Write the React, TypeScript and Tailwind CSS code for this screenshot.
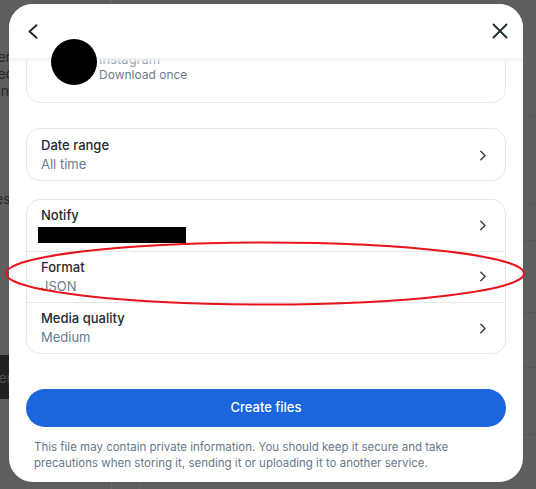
import { ReactNode } from 'react'

function ChevronRight() {
  return (
    <svg width="8" height="11" viewBox="0 0 8 11" fill="none" className="shrink-0">
      <path d="M1.8 1.3 L6 5.5 L1.8 9.7" stroke="#37444e" strokeWidth="1.5" strokeLinecap="round" strokeLinejoin="round" />
    </svg>
  )
}

function Row({ title, children, className = '' }: { title: string; children: ReactNode; className?: string }) {
  return (
    <div className={`flex items-center justify-between pl-[14px] pr-[18px] ${className}`}>
      <div className="flex flex-col">
        <span className="text-[13px] leading-[19px] font-medium text-[#1c2b33]">{title}</span>
        {children}
      </div>
      <ChevronRight />
    </div>
  )
}

function Value({ text }: { text: string }) {
  return <span className="text-[13px] leading-[19px] text-[#6a7b8c]">{text}</span>
}

export default function App() {
  return (
    <div
      className="relative h-[489px] w-[536px] overflow-hidden bg-[#5e5e5e] pl-[9px] pt-[4px]"
      style={{ fontFamily: 'Inter, "Noto Sans", sans-serif' }}
    >
      {/* page behind the overlay */}
      <div className="absolute left-0 top-[48px] flex flex-col text-[14px] leading-[17px] text-[#262626]">
        <span className="-ml-[7px]">ter</span>
        <span className="-ml-[7px]">ted</span>
        <span className="-ml-[7px]">and</span>
      </div>
      <span className="absolute -left-[5px] top-[188px] text-[14px] text-[#262626]">es</span>
      <div className="absolute left-0 top-[355px] flex h-[44px] w-[9px] items-center overflow-hidden bg-[#1e2225]">
        <span className="-ml-[6px] text-[14px] text-[#4c5257]">ter</span>
      </div>
      <div className="absolute right-0 top-[115px] h-px w-[14px] bg-[#555]" />
      <div className="absolute right-0 top-[204px] h-px w-[14px] bg-[#555]" />
      <div className="absolute right-0 top-[240px] h-px w-[14px] bg-[#555]" />
      <div className="absolute right-0 top-[312px] h-px w-[14px] bg-[#555]" />
      <div className="absolute right-0 top-[367px] h-px w-[14px] bg-[#555]" />
      <div className="absolute right-0 top-[434px] h-px w-[14px] bg-[#555]" />
      <div className="absolute left-[111px] top-0 h-[4px] w-px bg-[#6a6a6a]" />
      <div className="absolute bottom-0 left-[111px] h-[7px] w-px bg-[#6a6a6a]" />
      <div className="absolute bottom-0 left-[139px] h-[7px] w-px bg-[#6a6a6a]" />

      {/* dialog */}
      <div className="relative flex h-[478px] w-[514px] flex-col overflow-hidden rounded-[24px] bg-white">
        <div className="z-10 flex h-[54px] shrink-0 items-center justify-between bg-white pl-[18px] pr-[15px]">
          <svg width="12" height="15" viewBox="0 0 12 15" fill="none">
            <path d="M9.5 1.2 L2.5 7.5 L9.5 13.8" stroke="#1c2b33" strokeWidth="1.9" strokeLinecap="round" strokeLinejoin="round" />
          </svg>
          <svg width="16" height="16" viewBox="0 0 16 16" fill="none">
            <path d="M1.5 1.5 L14.5 14.5 M14.5 1.5 L1.5 14.5" stroke="#1c2b33" strokeWidth="1.8" strokeLinecap="round" />
          </svg>
        </div>

        <div className="relative flex flex-1 flex-col overflow-hidden px-[17px]">
          <div className="pointer-events-none absolute inset-x-0 top-0 z-10 h-[6px] bg-gradient-to-b from-[#f2f3f5] to-white/0" />

          <div className="-mt-[40px] flex flex-col rounded-[14px] border border-[#e4e7eb] pb-[19px] pl-[72px] pt-[32px]">
            <span className="text-[13px] leading-[16px] text-[#8d99a5]">Instagram</span>
            <span className="text-[12px] leading-[16px] text-[#6a7b8c]">Download once</span>
          </div>

          <div className="mt-[25px] rounded-[14px] border border-[#e4e7eb] pb-[6px] pt-[7px]">
            <Row title="Date range">
              <Value text="All time" />
            </Row>
          </div>

          <div className="mt-[18px] flex flex-col rounded-[14px] border border-[#e4e7eb]">
            <Row title="Notify" className="pb-[6.5px] pt-[6px]">
              <div className="-ml-[3px] mb-[1px] mt-[2px] h-[16px] w-[148px] bg-black" />
            </Row>
            <Row title="Format" className="border-t border-[#e4e7eb] pb-[6.5px] pt-[6px]">
              <Value text="JSON" />
            </Row>
            <Row title="Media quality" className="border-t border-[#e4e7eb] pb-[6px] pt-[6px]">
              <Value text="Medium" />
            </Row>
          </div>

          <button className="mt-[35px] h-[38px] shrink-0 rounded-full bg-[#1b65dd] text-[13px] font-medium text-white">
            Create files
          </button>

          <p className="mt-[13px] w-[440px] px-[8px] text-[11.5px] leading-[15.5px] text-[#67788a]">
            This file may contain private information. You should keep it secure and take precautions when storing it,
            sending it or uploading it to another service.
          </p>
        </div>
      </div>

      {/* redaction and annotation */}
      <div className="absolute left-[51px] top-[39px] z-20 h-[46px] w-[46px] rounded-full bg-black" />
      <svg className="pointer-events-none absolute left-0 top-0 z-20" width="536" height="489" viewBox="0 0 536 489" fill="none">
        <ellipse cx="265" cy="273.5" rx="259" ry="31" stroke="#e8141b" strokeWidth="2" />
      </svg>
    </div>
  )
}
